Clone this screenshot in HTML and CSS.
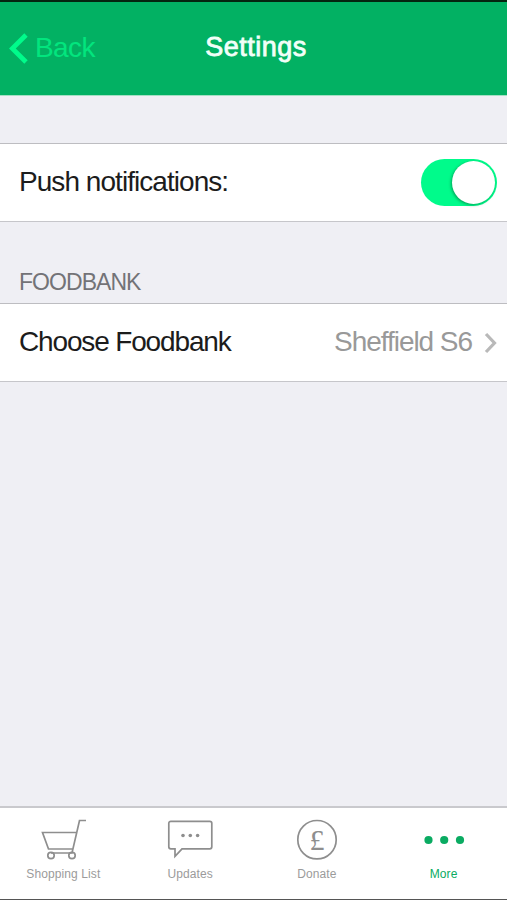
FILE: index.html
```
<!DOCTYPE html>
<html lang="en">
<head>
    <meta charset="UTF-8">
    <meta name="viewport" content="width=device-width, initial-scale=1.0">
    <title>Settings</title>
    <link rel="stylesheet" href="styles.css">
</head>
<body>
    <header class="navbar">
        <a class="back" href="#">
            <svg width="20" height="32" viewBox="0 0 20 32"><path d="M17 2L3.300 15.500 17 29" fill="none" stroke="currentColor" stroke-width="4.800"/></svg>
            <span class="back-text">Back</span>
        </a>
        <h1>Settings</h1>
    </header>

    <main>
        <div class="row">
            <span class="label label-push">Push notifications:</span>
            <span class="switch"><span class="knob"></span></span>
        </div>

        <h2>FOODBANK</h2>
        <div class="row">
            <span class="label label-choose">Choose Foodbank</span>
            <span class="value">Sheffield S6</span>
            <svg class="chevron" width="13" height="22" viewBox="0 0 13 22"><path d="M2 2l8.500 9L2 20" fill="none" stroke="currentColor" stroke-width="3.200"/></svg>
        </div>
    </main>

    <nav class="tabbar">
        <a class="tab" href="#">
            <svg width="46" height="42" viewBox="0 0 46 42" fill="none" stroke="currentColor" stroke-width="1.700">
                <path d="M46 1.500h-6.500L32 34H11M37.500 13.500H2.500l6 16.500H33"/>
                <circle cx="11" cy="36.500" r="3.200"/>
                <circle cx="32" cy="36.500" r="3.200"/>
            </svg>
            <span class="tab-text">Shopping List</span>
        </a>
        <a class="tab" href="#">
            <svg width="46" height="42" viewBox="0 0 46 42" fill="none" stroke="currentColor" stroke-width="1.700">
                <path d="M3.800 2.300h39a2 2 0 0 1 2 2v23.500a2 2 0 0 1-2 2H15L8 37.300v-7.500H3.800a2 2 0 0 1-2-2V4.300a2 2 0 0 1 2-2z"/>
                <g fill="currentColor" stroke="none">
                    <circle cx="16" cy="16.500" r="1.800"/>
                    <circle cx="23.300" cy="16.500" r="1.800"/>
                    <circle cx="30.600" cy="16.500" r="1.800"/>
                </g>
            </svg>
            <span class="tab-text">Updates</span>
        </a>
        <a class="tab" href="#">
            <svg width="46" height="42" viewBox="0 0 46 42">
                <circle cx="23" cy="20.700" r="19.200" fill="none" stroke="currentColor" stroke-width="1.700"/>
                <text class="pound" x="23" y="30.500" text-anchor="middle">£</text>
            </svg>
            <span class="tab-text">Donate</span>
        </a>
        <a class="tab active" href="#">
            <svg width="46" height="42" viewBox="0 0 46 42" fill="currentColor">
                <circle cx="7.500" cy="21" r="4.100"/>
                <circle cx="23.200" cy="21" r="4.100"/>
                <circle cx="39" cy="21" r="4.100"/>
            </svg>
            <span class="tab-text">More</span>
        </a>
    </nav>
</body>
</html>
```

FILE: styles.css
```
* {
    box-sizing: border-box;
}
body {
    margin: 0;
    height: 900px;
    display: flex;
    flex-direction: column;
    background: #efeff4;
    color: #1c1c1c;
    font-family: "Liberation Sans", Arial, sans-serif;
    overflow: hidden;
}
a {
    color: inherit;
    text-decoration: none;
}
svg {
    display: block;
    flex: none;
}
.navbar {
    display: grid;
    grid-template-columns: 1fr auto 1fr;
    align-items: center;
    height: 96px;
    padding: 0 4px 0 9px;
    background: #02b163;
    border-top: 2px solid #04250f;
    border-bottom: 1px solid #a5e0c4;
}
.back {
    display: flex;
    align-items: center;
    gap: 6px;
    color: #00fb8b;
}
.back-text {
    font-size: 28px;
    letter-spacing: -0.6px;
    color: #02e57e;
    margin-top: -2px;
}
h1 {
    margin: -2px 0 0;
    color: #f2fff8;
    font-size: 27px;
    font-weight: normal;
    letter-spacing: 0.5px;
    -webkit-text-stroke: 0.8px #f2fff8;
}
main {
    flex: 1;
    padding-top: 47px;
}
.row {
    display: flex;
    align-items: center;
    height: 79px;
    padding: 0 10px 0 19px;
    background: #fff;
    border-top: 1px solid #bdbdc1;
    border-bottom: 1px solid #c6c6ca;
}
.label,
.value {
    font-size: 28px;
    line-height: 32px;
    white-space: nowrap;
    margin-top: -2px;
}
.label {
    margin-right: auto;
}
.label-push {
    letter-spacing: -0.95px;
}
.label-choose {
    letter-spacing: -1.15px;
}
.value {
    color: #999;
    letter-spacing: -1.05px;
}
.chevron {
    margin-left: 12px;
    color: #b9b9b9;
}
.switch {
    display: flex;
    align-items: center;
    justify-content: flex-end;
    width: 76px;
    height: 47px;
    padding: 2px;
    border-radius: 24px;
    background: #00fb8b;
}
.knob {
    width: 43px;
    height: 43px;
    border-radius: 50%;
    background: #fff;
    box-shadow: -1px 1px 3px rgba(0, 80, 40, 0.5);
}
h2 {
    height: 81px;
    margin: 0;
    padding: 47px 0 0 19px;
    color: #737377;
    font-size: 23px;
    line-height: 26px;
    font-weight: normal;
    letter-spacing: -0.95px;
}
.tabbar {
    display: grid;
    grid-template-columns: repeat(4, 1fr);
    height: 94px;
    padding-top: 11px;
    background: #fff;
    border-top: 2px solid #c9c9cd;
    border-bottom: 1px solid #555;
    color: #8e8e8e;
}
.tab {
    display: flex;
    flex-direction: column;
    align-items: center;
}
.tab-text {
    margin-top: 5px;
    font-size: 12px;
    line-height: 16px;
    color: #9b9b9b;
    letter-spacing: 0.1px;
}
.pound {
    fill: currentColor;
    font-family: "Liberation Serif", serif;
    font-size: 30px;
}
.active,
.active .tab-text {
    color: #0aab62;
}
```
